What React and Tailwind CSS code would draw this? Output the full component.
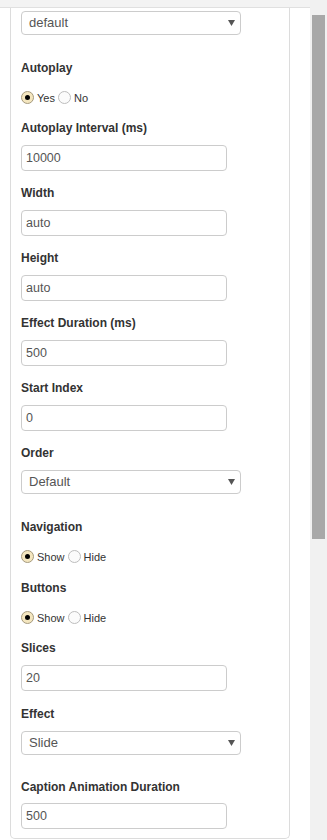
import React from "react";

const font = { fontFamily: '"Liberation Sans", Arial, sans-serif' };

function Label({ children, mt }) {
  return (
    <div className={`${mt} h-[16px] leading-[16px] text-[12px] font-bold text-[#333]`}>
      {children}
    </div>
  );
}

function Input({ value, mt }) {
  return (
    <div
      className={`${mt} w-[206px] h-[26px] border border-[#ccc] rounded-[4px] bg-white flex items-center pl-[4px] text-[12.5px] text-[#555]`}
    >
      {value}
    </div>
  );
}

function Select({ value, mt }) {
  return (
    <div
      className={`${mt} w-[220px] h-[24px] border border-[#ccc] rounded-[4px] bg-white flex items-center justify-between pl-[7px] pr-[5px] text-[13px] text-[#555]`}
    >
      <span>{value}</span>
      <svg width="7" height="6" viewBox="0 0 7 6">
        <path d="M0 0 H7 L3.5 6 Z" fill="#555" />
      </svg>
    </div>
  );
}

function Radio({ checked }) {
  return checked ? (
    <span className="w-[13px] h-[13px] rounded-full border border-[#a59a7e] bg-[#f4e6bf] flex items-center justify-center shrink-0">
      <span className="block w-[5px] h-[5px] rounded-full bg-black" />
    </span>
  ) : (
    <span className="block w-[13px] h-[13px] rounded-full border border-[#bdbdbd] bg-[#fbfbfb] shrink-0" />
  );
}

function Radios({ a, b, mt }) {
  return (
    <div className={`${mt} h-[16px] flex items-center text-[11px] text-[#333]`}>
      <Radio checked />
      <span className="ml-[3px] mt-[3px]">{a}</span>
      <span className="ml-[3px] block">
        <Radio />
      </span>
      <span className="ml-[3px] mt-[3px]">{b}</span>
    </div>
  );
}

export default function App() {
  return (
    <div className="w-[327px] h-[840px] flex overflow-hidden bg-white" style={font}>
      <div className="w-[310px] flex flex-col">
        <div className="h-[8px] shrink-0 bg-[#f3f3f3] border-b border-[#e0e0e0]" />
        <div className="ml-[10px] w-[280px] border-l border-r border-b border-[#dcdcdc] rounded-b-[5px] pl-[10px] pb-[9px] flex flex-col">
          <Select value="default" mt="mt-[3px]" />
          <Label mt="mt-[25px]">Autoplay</Label>
          <Radios a="Yes" b="No" mt="mt-[13px]" />
          <Label mt="mt-[15px]">Autoplay Interval (ms)</Label>
          <Input value="10000" mt="mt-[9px]" />
          <Label mt="mt-[14px]">Width</Label>
          <Input value="auto" mt="mt-[9px]" />
          <Label mt="mt-[14px]">Height</Label>
          <Input value="auto" mt="mt-[9px]" />
          <Label mt="mt-[14px]">Effect Duration (ms)</Label>
          <Input value="500" mt="mt-[9px]" />
          <Label mt="mt-[14px]">Start Index</Label>
          <Input value="0" mt="mt-[9px]" />
          <Label mt="mt-[14px]">Order</Label>
          <Select value="Default" mt="mt-[9px]" />
          <Label mt="mt-[25px]">Navigation</Label>
          <Radios a="Show" b="Hide" mt="mt-[13px]" />
          <Label mt="mt-[16px]">Buttons</Label>
          <Radios a="Show" b="Hide" mt="mt-[13px]" />
          <Label mt="mt-[15px]">Slices</Label>
          <Input value="20" mt="mt-[9px]" />
          <Label mt="mt-[15px]">Effect</Label>
          <Select value="Slide" mt="mt-[9px]" />
          <Label mt="mt-[24px]">Caption Animation Duration</Label>
          <Input value="500" mt="mt-[8px]" />
        </div>
      </div>
      <div className="w-[17px] h-[840px] bg-[#f1f1f1] flex flex-col">
        <div className="ml-[2px] mt-[15px] w-[13px] h-[524px] bg-[#a8a8a8]" />
      </div>
    </div>
  );
}
